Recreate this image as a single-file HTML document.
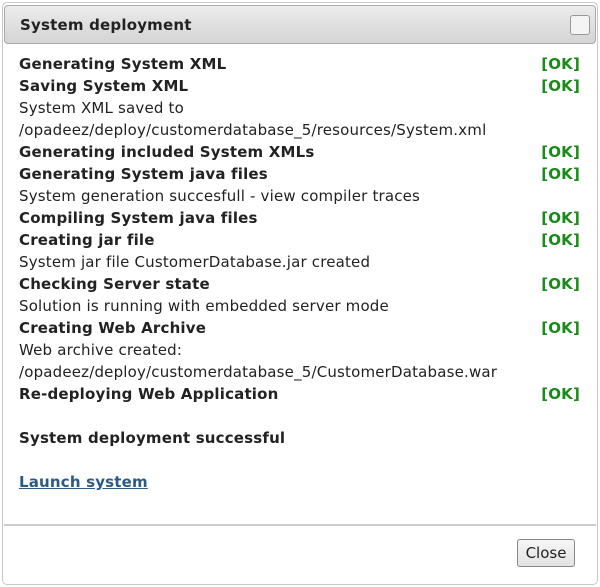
<!DOCTYPE html>
<html><head><style>
*{margin:0;padding:0;box-sizing:border-box}
body{width:600px;height:587px;background:#fff;font-family:"DejaVu Sans",Verdana,sans-serif;color:#222;position:relative;overflow:hidden}
.dlg{position:absolute;left:2px;top:2px;width:596px;height:583px;border:1px solid #c8c8c8;border-radius:5px;background:#fff}
.tb{position:absolute;left:4px;top:5px;width:592px;height:39px;border:1px solid #aaa;border-radius:4px;background:linear-gradient(#ececec,#d4d4d4)}
.tb span{position:absolute;left:15px;top:10px;font-weight:bold;font-size:15px;color:#222;letter-spacing:0.2px}
.tb i{position:absolute;right:5px;top:9px;width:20px;height:20px;border:1px solid #999;border-radius:3px;background:#f4f4f4}
.c{position:absolute;left:19px;top:53px;width:561px;font-size:15px;line-height:22px;letter-spacing:0.18px}
.r{height:22px;white-space:nowrap;position:relative}
.b{font-weight:bold}
.ok{position:absolute;right:0;top:0;color:#1a8a1a;font-weight:bold}
a{color:#2a5a85;font-weight:bold;text-decoration:underline}
.sep{position:absolute;left:4px;top:524px;width:592px;height:2px;background:#ccc}
.btn{position:absolute;left:517px;top:539px;width:58px;height:28px;border:1px solid #888;border-radius:3px;background:linear-gradient(#f6f6f6,#e2e2e2);font-size:15px;text-align:center;line-height:26px;color:#222}
</style></head><body>
<div class="dlg"></div>
<div class="tb"><span>System deployment</span><i></i></div>
<div class="c">
<div class="r b">Generating System XML<span class="ok">[OK]</span></div>
<div class="r b">Saving System XML<span class="ok">[OK]</span></div>
<div class="r">System XML saved to</div>
<div class="r">/opadeez/deploy/customerdatabase_5/resources/System.xml</div>
<div class="r b">Generating included System XMLs<span class="ok">[OK]</span></div>
<div class="r b">Generating System java files<span class="ok">[OK]</span></div>
<div class="r">System generation succesfull - view compiler traces</div>
<div class="r b">Compiling System java files<span class="ok">[OK]</span></div>
<div class="r b">Creating jar file<span class="ok">[OK]</span></div>
<div class="r">System jar file CustomerDatabase.jar created</div>
<div class="r b">Checking Server state<span class="ok">[OK]</span></div>
<div class="r">Solution is running with embedded server mode</div>
<div class="r b">Creating Web Archive<span class="ok">[OK]</span></div>
<div class="r">Web archive created:</div>
<div class="r">/opadeez/deploy/customerdatabase_5/CustomerDatabase.war</div>
<div class="r b">Re-deploying Web Application<span class="ok">[OK]</span></div>
<div class="r"></div>
<div class="r b">System deployment successful</div>
<div class="r"></div>
<div class="r"><a>Launch system</a></div>
</div>
<div class="sep"></div>
<div class="btn">Close</div>
</body></html>
